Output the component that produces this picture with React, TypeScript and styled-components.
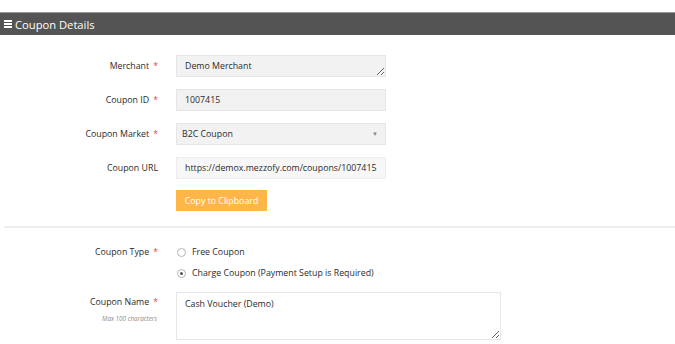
import React from "react";
import styled, { createGlobalStyle } from "styled-components";

const Global = createGlobalStyle`
  html, body { margin: 0; padding: 0; background: #fff; }
  body { font-family: "Open Sans", "Liberation Sans", sans-serif; color: #333; }
  * { box-sizing: border-box; }
`;

const Page = styled.div`
  padding-top: 12px;
  width: 675px;
  height: 344px;
  overflow: hidden;
`;

const Header = styled.div`
  height: 23px;
  background: #545454;
  border-top: 1px solid #9a9a9a;
  color: #fff;
  font-size: 11.2px;
  display: flex;
  align-items: center;
  padding-left: 4px;
  gap: 2px;
`;

const Burger = styled.span`
  display: inline-flex;
  flex-direction: column;
  gap: 1.5px;
  width: 8px;
  margin-right: 1px;
  & > i { display: block; height: 1.5px; background: #fff; }
`;

const Body = styled.div`
  padding: 20px 0 0 4px;
  display: flex;
  flex-direction: column;
`;

const Row = styled.div<{ $gap?: number }>`
  display: grid;
  grid-template-columns: 172px 1fr;
  align-items: start;
  margin-bottom: ${(p) => p.$gap ?? 12}px;
`;

const LabelCol = styled.div`
  padding-right: 18px;
  text-align: right;
  font-size: 8.8px;
  color: #2b2b2b;
  display: flex;
  flex-direction: column;
  align-items: flex-end;
`;

const LabelText = styled.div<{ $h?: number }>`
  height: ${(p) => p.$h ?? 22}px;
  line-height: ${(p) => p.$h ?? 22}px;
  white-space: nowrap;
`;

const Req = styled.span`
  color: #e0483c;
  margin-left: 4px;
`;

const Hint = styled.div`
  font-size: 6.3px;
  font-style: italic;
  color: #8a8a8a;
  margin-top: 2px;
  margin-right: 1px;
`;

const fieldBase = `
  font-family: "Open Sans", "Liberation Sans", sans-serif;
  font-size: 8.8px;
  color: #2b2b2b;
  border: 1px solid #e6e6e6;
  outline: none;
  margin: 0;
`;

const Field = styled.div`
  display: flex;
  flex-direction: column;
  align-items: flex-start;
`;

const ReadArea = styled.textarea`
  ${fieldBase}
  width: 210px;
  height: 22px;
  background: #f2f2f2;
  padding: 4px 8px;
  resize: both;
  overflow: hidden;
  display: block;
  line-height: 12px;
`;

const ReadInput = styled.input<{ $light?: boolean }>`
  ${fieldBase}
  width: 210px;
  height: 22px;
  background: ${(p) => (p.$light ? "#f7f7f7" : "#f2f2f2")};
  padding: 0 8px;
  display: block;
  border-color: ${(p) => (p.$light ? "#ececec" : "#e6e6e6")};
`;

const SelectBox = styled.div`
  ${fieldBase}
  width: 210px;
  height: 22px;
  background: #f2f2f2;
  padding: 0 5px;
  display: flex;
  align-items: center;
  justify-content: space-between;
  & > span.arrow {
    font-size: 6px;
    color: #888;
    margin-right: 2px;
  }
`;

const CopyButton = styled.button`
  font-family: "Open Sans", "Liberation Sans", sans-serif;
  font-size: 8.8px;
  color: #fff;
  background: #ffb648;
  border: none;
  height: 21px;
  width: 91px;
  padding: 0;
  margin: 0;
  cursor: pointer;
  display: block;
`;

const Divider = styled.hr`
  border: none;
  border-top: 2px solid #ededed;
  margin: 15px 0 14px 0;
  height: 0;
`;

const Radios = styled.div`
  display: flex;
  flex-direction: column;
  gap: 9px;
  padding-top: 4px;
`;

const RadioItem = styled.label`
  display: flex;
  align-items: center;
  font-size: 8.8px;
  color: #2b2b2b;
  height: 12px;
  gap: 6px;
  padding-left: 1px;
`;

const RadioDot = styled.span<{ $on?: boolean }>`
  width: 9px;
  height: 9px;
  border-radius: 50%;
  border: 1px solid #b5b5b5;
  background: #fff;
  display: inline-flex;
  align-items: center;
  justify-content: center;
  &::after {
    content: "";
    width: 3px;
    height: 3px;
    border-radius: 50%;
    background: ${(p) => (p.$on ? "#555" : "transparent")};
  }
`;

const NameArea = styled.textarea`
  ${fieldBase}
  width: 325px;
  height: 48px;
  background: #fff;
  padding: 4px 8px;
  resize: both;
  display: block;
  line-height: 14px;
`;

export default function App() {
  return (
    <Page>
      <Global />
      <Header>
        <Burger>
          <i />
          <i />
          <i />
        </Burger>
        Coupon Details
      </Header>
      <Body>
        <Row>
          <LabelCol>
            <LabelText>
              Merchant<Req>*</Req>
            </LabelText>
          </LabelCol>
          <Field>
            <ReadArea readOnly defaultValue="Demo Merchant" />
          </Field>
        </Row>
        <Row>
          <LabelCol>
            <LabelText>
              Coupon ID<Req>*</Req>
            </LabelText>
          </LabelCol>
          <Field>
            <ReadInput readOnly defaultValue="1007415" />
          </Field>
        </Row>
        <Row>
          <LabelCol>
            <LabelText>
              Coupon Market<Req>*</Req>
            </LabelText>
          </LabelCol>
          <Field>
            <SelectBox>
              <span>B2C Coupon</span>
              <span className="arrow">▼</span>
            </SelectBox>
          </Field>
        </Row>
        <Row $gap={11}>
          <LabelCol>
            <LabelText>Coupon URL</LabelText>
          </LabelCol>
          <Field>
            <ReadInput $light readOnly defaultValue="https://demox.mezzofy.com/coupons/1007415" />
          </Field>
        </Row>
        <Row $gap={0}>
          <LabelCol />
          <Field>
            <CopyButton>Copy to Clipboard</CopyButton>
          </Field>
        </Row>
        <Divider />
        <Row $gap={13}>
          <LabelCol>
            <LabelText $h={20}>
              Coupon Type<Req>*</Req>
            </LabelText>
          </LabelCol>
          <Radios>
            <RadioItem>
              <RadioDot />
              Free Coupon
            </RadioItem>
            <RadioItem>
              <RadioDot $on />
              Charge Coupon (Payment Setup is Required)
            </RadioItem>
          </Radios>
        </Row>
        <Row>
          <LabelCol>
            <LabelText $h={20}>
              Coupon Name<Req>*</Req>
            </LabelText>
            <Hint>Max 100 characters</Hint>
          </LabelCol>
          <Field>
            <NameArea defaultValue="Cash Voucher (Demo)" />
          </Field>
        </Row>
      </Body>
    </Page>
  );
}
